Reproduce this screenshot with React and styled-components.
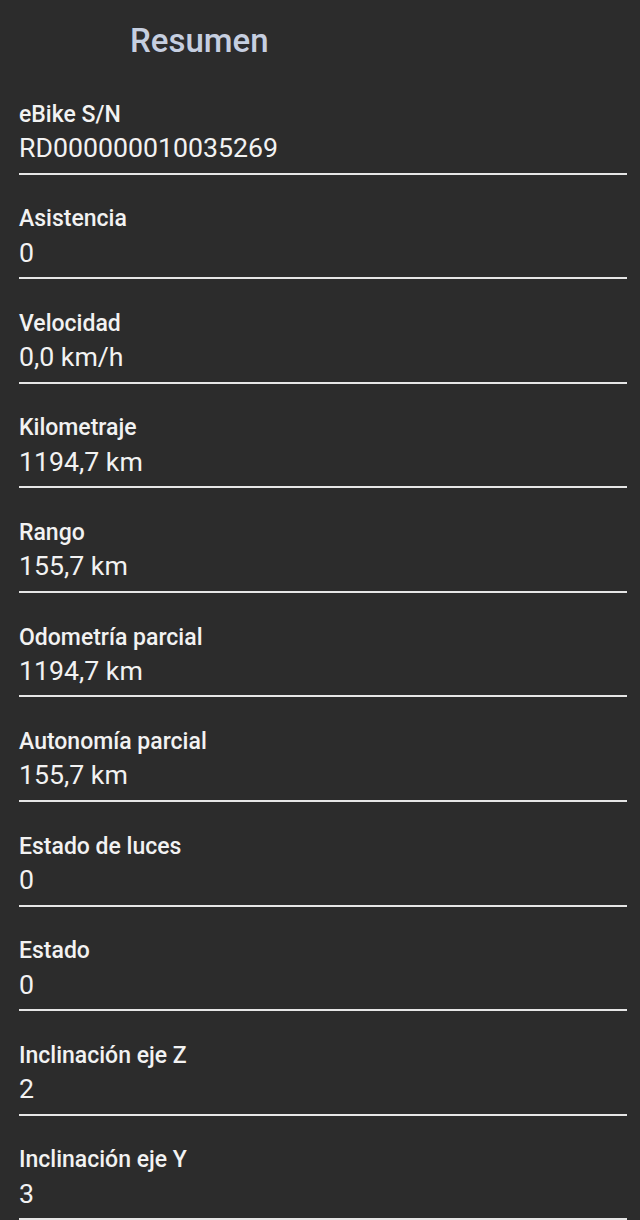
import React from "react";
import styled, { createGlobalStyle } from "styled-components";

const Global = createGlobalStyle`
  html, body { margin: 0; padding: 0; background: #2c2c2c; }
  body { font-family: Roboto, "Noto Sans", sans-serif; }
`;

const Page = styled.div`
  background: #2c2c2c;
  min-height: 1220px;
  padding: 0 13px 0 19px;
  box-sizing: border-box;
  overflow: hidden;
`;

const Header = styled.h1`
  margin: 0;
  padding: 20.7px 0 9.3px 111px;
  font-size: 33px;
  line-height: 40px;
  font-weight: 500;
  color: #c6cfe0;
`;

const List = styled.div`
  display: flex;
  flex-direction: column;
`;

const Row = styled.div`
  display: flex;
  flex-direction: column;
  padding: 32.7px 0 8.6px;
  border-bottom: 2px solid #e6e6e6;
`;

const Label = styled.div`
  font-size: 23px;
  line-height: 24px;
  font-weight: 500;
  color: #f2f2f2;
  margin-bottom: 5.3px;
`;

const Value = styled.div`
  font-size: 26.7px;
  line-height: 32px;
  font-weight: 400;
  color: #f2f2f2;
`;

const items = [
  ["eBike S/N", "RD000000010035269"],
  ["Asistencia", "0"],
  ["Velocidad", "0,0 km/h"],
  ["Kilometraje", "1194,7 km"],
  ["Rango", "155,7 km"],
  ["Odometría parcial", "1194,7 km"],
  ["Autonomía parcial", "155,7 km"],
  ["Estado de luces", "0"],
  ["Estado", "0"],
  ["Inclinación eje Z", "2"],
  ["Inclinación eje Y", "3"],
];

export default function App() {
  return (
    <Page>
      <Global />
      <Header>Resumen</Header>
      <List>
        {items.map(([l, v]) => (
          <Row key={l}>
            <Label>{l}</Label>
            <Value>{v}</Value>
          </Row>
        ))}
      </List>
    </Page>
  );
}
